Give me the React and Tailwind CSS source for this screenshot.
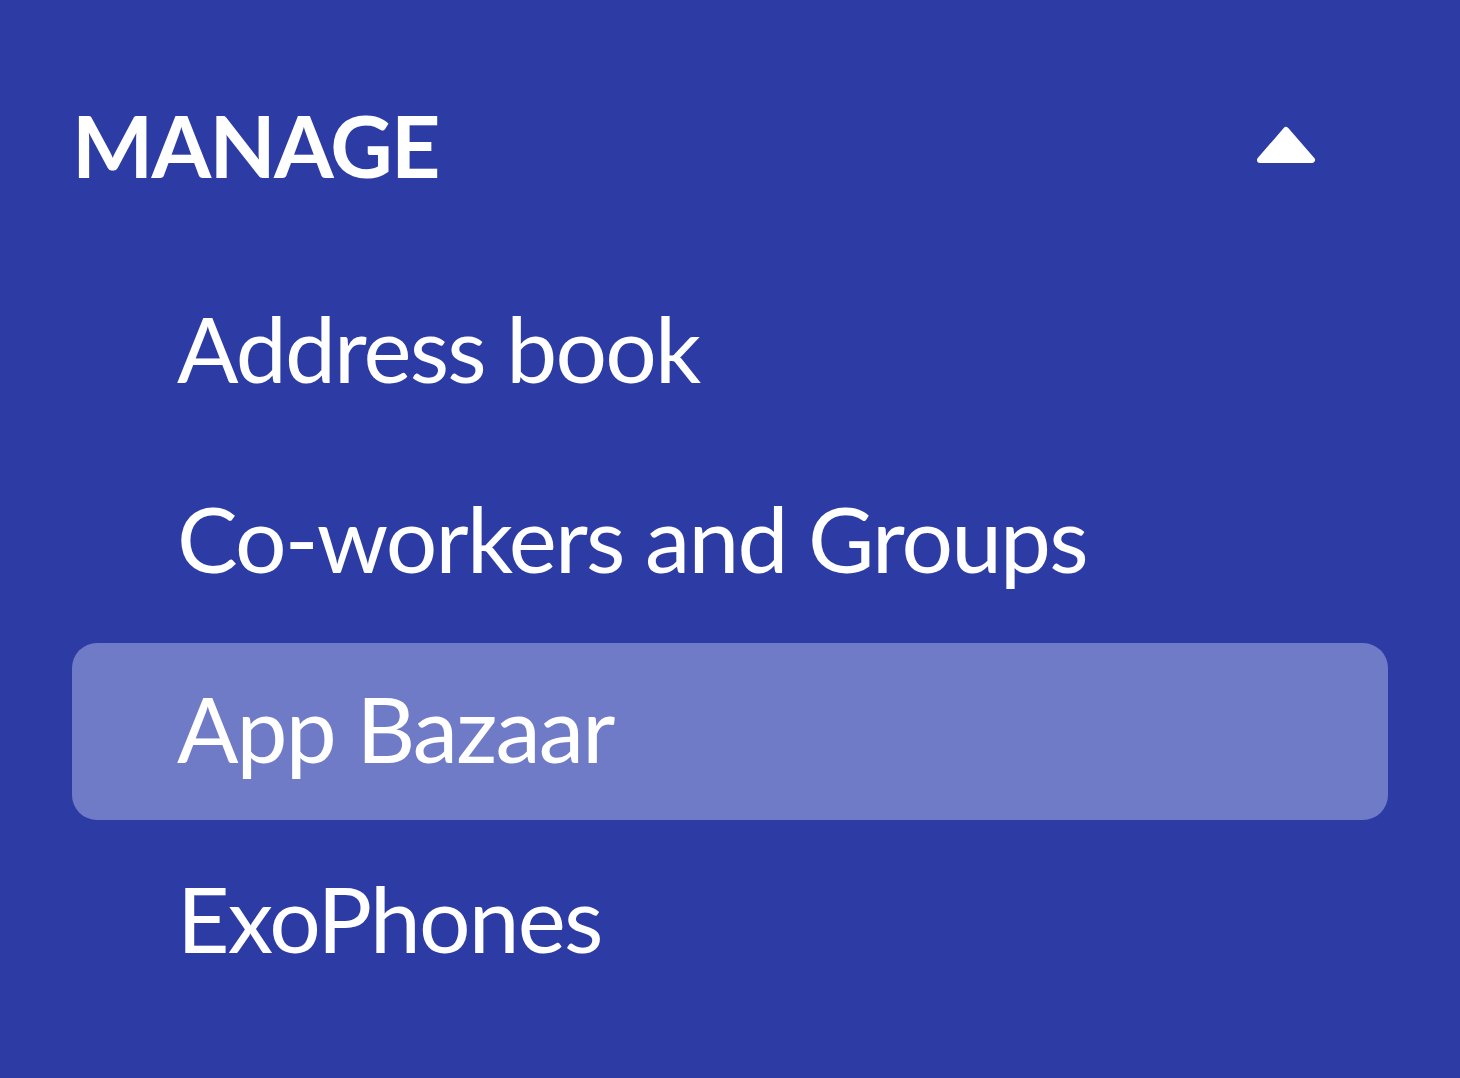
import React, { useState } from "react";

const ITEMS = ["Address book", "Co-workers and Groups", "App Bazaar", "ExoPhones"];

export default function App() {
  const [active, setActive] = useState("App Bazaar");
  const [open, setOpen] = useState(true);

  return (
    <div
      className="min-h-screen w-full bg-[#2d3ca5] text-white"
      style={{ fontFamily: "Lato, 'Noto Sans', sans-serif" }}
    >
      <div className="px-[72px] pt-[95px]">
        {/* section header */}
        <div className="flex h-[100px] items-center justify-between pr-[72px]">
          <h2 className="text-[86px] font-bold leading-none tracking-[-0.02em]">MANAGE</h2>
          <button onClick={() => setOpen(!open)} aria-label="Collapse section">
            <svg width="60" height="38" viewBox="0 0 60 38">
              <path
                d="M30 4 L56 34 L4 34 Z"
                fill="white"
                stroke="white"
                strokeWidth="6"
                strokeLinejoin="round"
              />
            </svg>
          </button>
        </div>

        {/* items */}
        {open && (
          <div className="mt-[68px] flex flex-col gap-[13px]">
            {ITEMS.map((item) => (
              <button
                key={item}
                onClick={() => setActive(item)}
                className={`flex h-[177px] w-full items-center rounded-[25px] pb-[8px] pl-[105px] text-left text-[91px] font-normal leading-none tracking-[-0.02em] ${
                  active === item ? "bg-[#6f7bc6]" : ""
                }`}
              >
                {item}
              </button>
            ))}
          </div>
        )}
      </div>
    </div>
  );
}
